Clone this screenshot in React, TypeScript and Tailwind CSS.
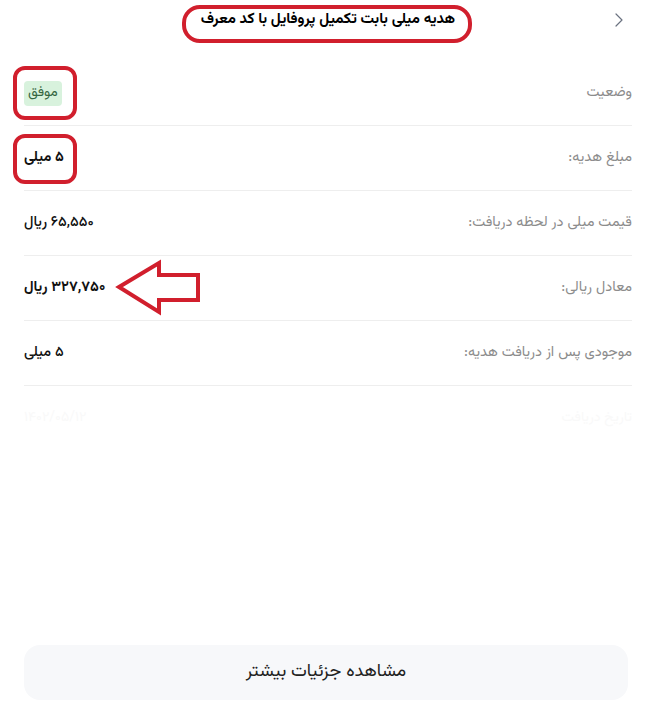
import React from 'react';

const rows = [
  { label: 'مبلغ هدیه:', value: '۵ میلی', bold: true },
  { label: 'قیمت میلی در لحظه دریافت:', value: '۶۵,۵۵۰ ریال', bold: false },
  { label: 'معادل ریالی:', value: '۳۲۷,۷۵۰ ریال', bold: true },
  { label: 'موجودی پس از دریافت هدیه:', value: '۵ میلی', bold: false },
];

export default function App() {
  return (
    <div
      dir="rtl"
      className="relative min-h-[715px] w-full bg-white flex flex-col pl-6 pr-5"
      style={{ fontFamily: '"Vazirmatn", "DejaVu Sans", "Noto Sans", sans-serif' }}
    >
      {/* Header */}
      <div className="relative h-10 flex items-center justify-center">
        <button className="absolute right-[9px] top-[13px]">
          <svg width="8" height="14" viewBox="0 0 8 14" fill="none">
            <path d="M1 1l6 6-6 6" stroke="#6b7280" strokeWidth="1.2" strokeLinecap="round" strokeLinejoin="round" />
          </svg>
        </button>
        <h1 className="text-[15px] font-bold text-black">هدیه میلی بابت تکمیل پروفایل با کد معرف</h1>
      </div>

      {/* Details */}
      <div className="mt-[21px] flex flex-col">
        <div className="h-[65px] flex items-center justify-between border-b border-[#eeeeee]">
          <span className="text-[14.5px] text-[#8c8c8c]">وضعیت</span>
          <span className="bg-[#d8f2dd] text-[#356642] text-[14px] rounded px-1 py-0.5">موفق</span>
        </div>
        {rows.map((r, i) => (
          <div key={i} className="h-[65px] flex items-center justify-between border-b border-[#eeeeee]">
            <span className="text-[14.5px] text-[#8c8c8c]">{r.label}</span>
            <span className={`text-[14.5px] text-[#111] ${r.bold ? 'font-bold' : 'font-medium'}`}>{r.value}</span>
          </div>
        ))}
        <div className="h-[65px] flex items-center justify-between">
          <span className="text-[14px] text-[#f9f9f9]">تاریخ دریافت</span>
          <span className="text-[14px] text-[#f9f9f9]">۱۴۰۲/۰۵/۱۲</span>
        </div>
      </div>

      <div className="flex-1" />

      {/* Bottom button */}
      <div className="pb-[15px] pr-1">
        <button className="w-full h-[55px] rounded-2xl bg-[#f7f8fa] text-[18px] text-[#222]">
          مشاهده جزئیات بیشتر
        </button>
      </div>

      {/* Red annotations */}
      <div className="absolute left-[182px] top-[5px] w-[290px] h-[38px] rounded-[18px] border-4 border-[#d11f2d]" />
      <div className="absolute left-[13px] top-[66px] w-[64px] h-[54px] rounded-xl border-4 border-[#d11f2d]" />
      <div className="absolute left-[13px] top-[134px] w-[64px] h-[50px] rounded-xl border-4 border-[#d11f2d]" />
      <svg className="absolute left-[114px] top-[258px]" width="90" height="60" viewBox="0 0 90 60">
        <path
          d="M5 29 L45 5 L45 17 L84 17 L84 42 L45 42 L45 54 Z"
          fill="none"
          stroke="#d11f2d"
          strokeWidth="4"
          strokeLinejoin="miter"
        />
      </svg>
    </div>
  );
}
